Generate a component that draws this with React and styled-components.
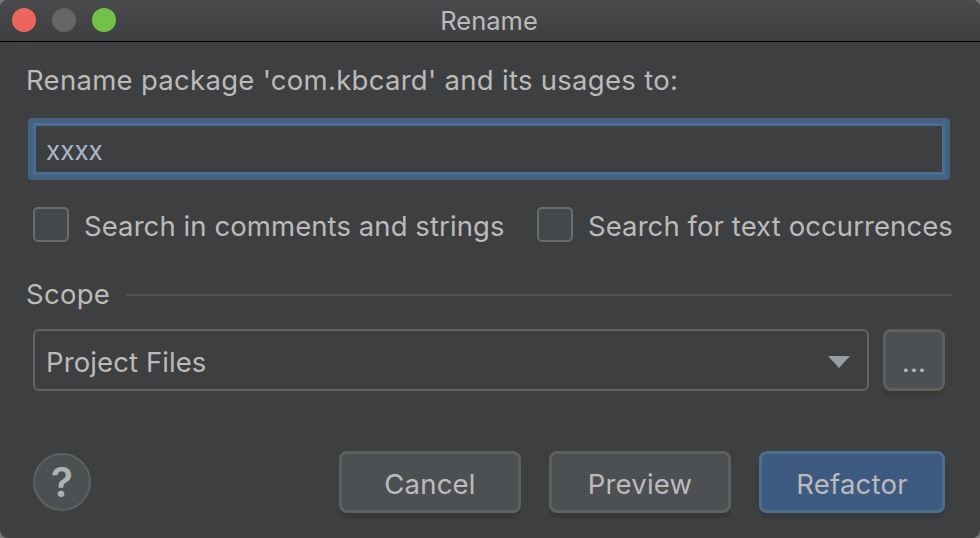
import React, { useState } from 'react';
import styled, { createGlobalStyle } from 'styled-components';

const GlobalStyle = createGlobalStyle`
  * {
    box-sizing: border-box;
  }

  body {
    margin: 0;
    background: #77797a;
    overflow: hidden;
  }

  button, input {
    font-family: inherit;
    margin: 0;
    outline: none;
  }
`;

const Dialog = styled.div`
  width: 980px;
  height: 538px;
  display: flex;
  flex-direction: column;
  background: #3d3f41;
  border-radius: 8px;
  overflow: hidden;
  color: #bbbbbb;
  font-family: Inter, 'Liberation Sans', sans-serif;
  font-size: 27.5px;
`;

const TitleBar = styled.header`
  display: grid;
  grid-template-columns: 1fr auto 1fr;
  align-items: center;
  height: 42px;
  padding: 0 14px 0 12px;
  background: linear-gradient(#4a4b4d, #3d3e40);
  border-bottom: 1px solid #000000;
`;

const WindowControls = styled.div`
  display: flex;
  gap: 16px;
`;

const ControlDot = styled.span`
  width: 24px;
  height: 24px;
  margin-top: -1px;
  border-radius: 50%;
  background: ${({ $color }) => $color};
`;

const Title = styled.h1`
  margin: 0;
  font-size: 25.5px;
  line-height: 40px;
  font-weight: 400;
`;

const Content = styled.main`
  flex: 1;
  display: flex;
  flex-direction: column;
  padding: 22px 28px 0;
`;

const Label = styled.label`
  height: 34px;
  margin-left: -2px;
  line-height: 32px;
  white-space: nowrap;
  letter-spacing: 0.29px;
`;

const NameInput = styled.input`
  width: 922px;
  height: 62px;
  margin-top: 20px;
  padding: 2px 13px 0;
  border: 5px solid #466080;
  border-radius: 4px;
  box-shadow: inset 0 0 0 3px #4b6e96;
  background: #3d3f41;
  color: #a9b7c6;
  font-size: 26px;
`;

const OptionRow = styled.div`
  display: flex;
  margin-top: 27px;
  padding-left: 5px;
  height: 36px;
`;

const Option = styled.label`
  display: flex;
  flex: 0 0 auto;
  width: 504px;
  gap: 15px;
  line-height: 39px;
  white-space: nowrap;
  letter-spacing: 0.08px;
`;

const Checkbox = styled.input`
  appearance: none;
  width: 36px;
  height: 35px;
  border: 2px solid #6b6b6b;
  border-radius: 5px;
  background: #43494a;
`;

const ScopeHeader = styled.div`
  display: flex;
  align-items: center;
  justify-content: space-between;
  width: 926px;
  height: 34px;
  margin-top: 35px;
  padding-right: 2px;
`;

const Rule = styled.span`
  width: 826px;
  height: 2px;
  background: #505254;
`;

const ScopeRow = styled.div`
  display: flex;
  gap: 14px;
  margin-top: 17px;
  padding-left: 5px;
`;

const ComboBox = styled.button`
  display: flex;
  align-items: center;
  justify-content: space-between;
  width: 836px;
  height: 62px;
  padding: 4px 17px 0 11px;
  border: 2px solid #646464;
  border-radius: 6px;
  background: #3d3f41;
  color: #bbbbbb;
  font-size: 27.5px;
  letter-spacing: 0.1px;
`;

const Arrow = styled.svg`
  display: block;
  width: 22px;
  height: 12px;
`;

const Button = styled.button`
  width: ${({ $width }) => $width || '182px'};
  height: 62px;
  padding: 4px 0 0;
  border: 3px solid ${({ $primary }) => ($primary ? '#4c708c' : '#5e6060')};
  border-radius: 8px;
  box-shadow: 0 6px 0 -0.5px #37393b;
  background: ${({ $primary }) => ($primary ? '#3d5a80' : '#4c5052')};
  color: #bbbbbb;
  font-size: 27.5px;
  letter-spacing: 0.2px;
`;

const Footer = styled.footer`
  display: flex;
  align-items: center;
  justify-content: space-between;
  margin-top: 60px;
  padding: 0 7px 0 5px;
`;

const HelpButton = styled.button`
  width: 58px;
  height: 58px;
  padding: 0;
  border: 2px solid #5e6060;
  border-radius: 50%;
  background: #4c5052;
  color: #afb1b3;
  font-size: 41px;
  line-height: 54px;
  font-weight: 600;
`;

const Actions = styled.div`
  display: flex;
  gap: 28px;
`;

const App = () => {
  const [name, setName] = useState('xxxx');

  return (
    <>
      <GlobalStyle />
      <Dialog>
        <TitleBar>
          <WindowControls>
            <ControlDot $color="#ed665c" />
            <ControlDot $color="#656668" />
            <ControlDot $color="#72c24a" />
          </WindowControls>
          <Title>Rename</Title>
        </TitleBar>

        <Content>
          <Label htmlFor="name">Rename package 'com.kbcard' and its usages to:</Label>
          <NameInput id="name" value={name} onChange={(e) => setName(e.target.value)} />

          <OptionRow>
            <Option>
              <Checkbox type="checkbox" />
              Search in comments and strings
            </Option>
            <Option>
              <Checkbox type="checkbox" />
              Search for text occurrences
            </Option>
          </OptionRow>

          <ScopeHeader>
            <Label as="span">Scope</Label>
            <Rule />
          </ScopeHeader>

          <ScopeRow>
            <ComboBox>
              Project Files
              <Arrow viewBox="0 0 22 12">
                <path d="M0 0H22L11 12Z" fill="#9a9da0" />
              </Arrow>
            </ComboBox>
            <Button $width="62px">...</Button>
          </ScopeRow>

          <Footer>
            <HelpButton>?</HelpButton>
            <Actions>
              <Button>Cancel</Button>
              <Button>Preview</Button>
              <Button $primary $width="186px">Refactor</Button>
            </Actions>
          </Footer>
        </Content>
      </Dialog>
    </>
  );
};

export default App;
